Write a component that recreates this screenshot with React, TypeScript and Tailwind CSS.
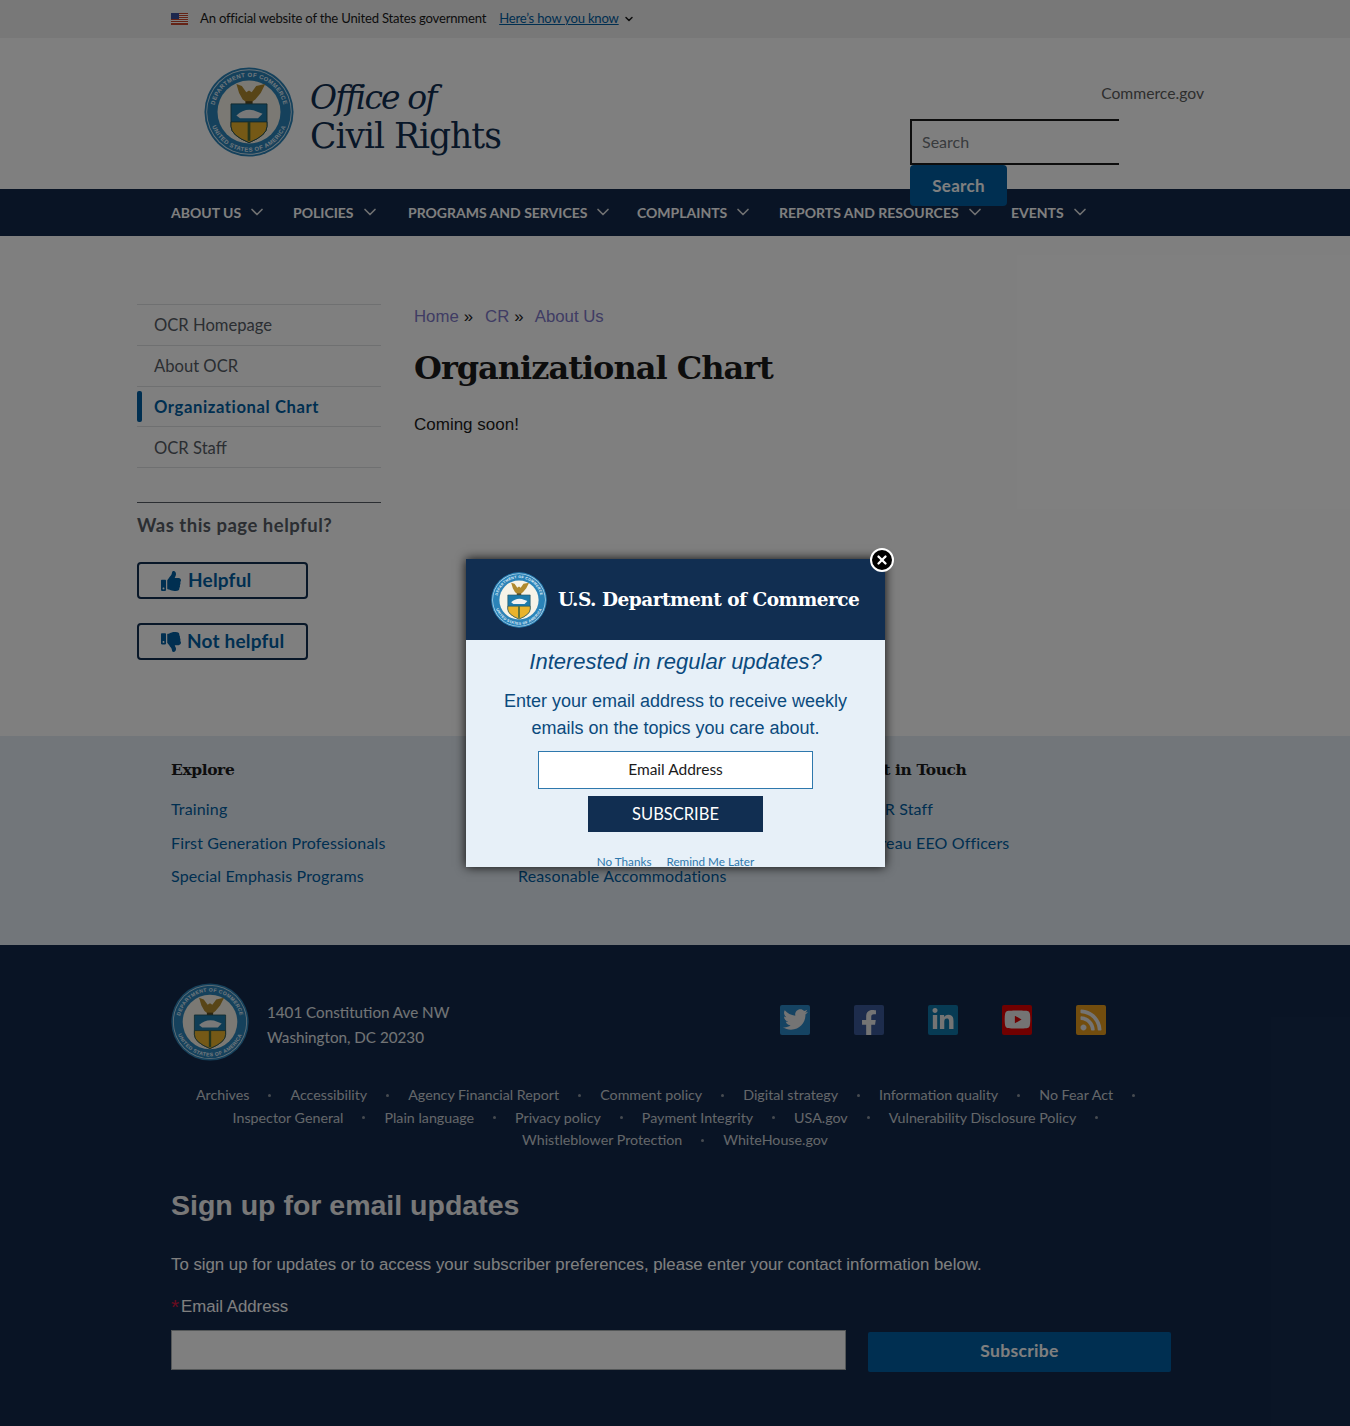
import React from 'react';
import { ChevronDown, X } from 'lucide-react';
import { FaThumbsUp, FaThumbsDown, FaTwitter, FaFacebookF, FaLinkedinIn, FaYoutube, FaRss } from 'react-icons/fa';

const navItems = [
  { label: 'About us', width: 'w-[122px]' },
  { label: 'Policies', width: 'w-[115px]' },
  { label: 'Programs and services', width: 'w-[229px]' },
  { label: 'Complaints', width: 'w-[142px]' },
  { label: 'Reports and resources', width: 'w-[232px]' },
  { label: 'Events', width: 'w-auto' },
];

const sideLinks = ['OCR Homepage', 'About OCR', 'Organizational Chart', 'OCR Staff'];

const footerRows = [
  ['Archives', 'Accessibility', 'Agency Financial Report', 'Comment policy', 'Digital strategy', 'Information quality', 'No Fear Act'],
  ['Inspector General', 'Plain language', 'Privacy policy', 'Payment Integrity', 'USA.gov', 'Vulnerability Disclosure Policy'],
  ['Whistleblower Protection', 'WhiteHouse.gov'],
];

function Seal({ className }: { className: string }) {
  return (
    <svg viewBox="0 0 100 100" className={className}>
      <defs>
        <path id="sealTop" d="M 11 50 A 39 39 0 0 1 89 50" />
        <path id="sealBottom" d="M 6 50 A 44 44 0 0 0 94 50" />
      </defs>
      <circle cx="50" cy="50" r="49.5" fill="#2b83b8" />
      <circle cx="50" cy="50" r="47.5" fill="#d5e7f2" />
      <circle cx="50" cy="50" r="46.5" fill="#2b83b8" />
      <circle cx="50" cy="50" r="35" fill="#f6f3e8" />
      <text fontSize="6.5" fontWeight="700" fill="#e3f0f8" fontFamily="Liberation Sans, sans-serif" letterSpacing="0.5">
        <textPath href="#sealTop" startOffset="50%" textAnchor="middle">DEPARTMENT OF COMMERCE</textPath>
      </text>
      <text fontSize="6.5" fontWeight="700" fill="#e3f0f8" fontFamily="Liberation Sans, sans-serif" letterSpacing="0.5">
        <textPath href="#sealBottom" startOffset="50%" textAnchor="middle">UNITED STATES OF AMERICA</textPath>
      </text>
      <path d="M36 19 L42 21 L47 28 L50 26 L53 28 L58 21 L68 19 L63 29 L57 36 L53 39 H47 L43 36 L39 29 Z" fill="#b08a2e" />
      <rect x="46" y="38" width="8" height="3" fill="#5b4a1c" />
      <path d="M30 41 H70 V66 Q70 76 50 84 Q30 76 30 66 Z" fill="#1f7bab" stroke="#1f4e56" strokeWidth="1" />
      <path d="M30 61 H70 V66 Q70 76 50 84 Q30 76 30 66 Z" fill="#eab32c" stroke="#1f4e56" strokeWidth="1" />
      <path d="M36 54 Q44 46 55 48 L65 52 L60 57 H40 Z" fill="#f2f2f2" />
      <rect x="48.5" y="61" width="3" height="21" fill="#4a6a3a" />
    </svg>
  );
}

function Flag() {
  return (
    <svg viewBox="0 0 17 12" className="w-[17px] h-3">
      <rect width="17" height="12" fill="#fff" />
      <path d="M0 0h17v1H0zM0 2h17v1H0zM0 4h17v1H0zM0 6h17v1H0zM0 8h17v1H0zM0 10h17v1H0z" fill="#c9462c" />
      <rect y="11" width="17" height="1" fill="#c9462c" />
      <rect width="8" height="6" fill="#3b4f9c" />
    </svg>
  );
}

function SocialIcon({ bg, children }: { bg: string; children: React.ReactNode }) {
  return (
    <a className={`w-[30px] h-[30px] rounded-[2px] flex items-center justify-center text-[#e8e8e8] overflow-hidden ${bg}`}>
      {children}
    </a>
  );
}

export default function App() {
  return (
    <div className="relative h-[1426px] overflow-hidden bg-white text-[#1b1b1b] font-['Lato',sans-serif]">
      {/* gov banner */}
      <div className="h-[38px] bg-[#f0f0f0] pl-[171px] flex items-center text-[13.1px] tracking-[-0.2px]">
        <Flag />
        <span className="ml-3">An official website of the United States government</span>
        <a className="ml-[13px] text-[#005ea2] underline">Here’s how you know</a>
        <ChevronDown className="w-3 h-3 ml-[4px] text-[#1b1b1b]" strokeWidth={3} />
      </div>

      {/* header */}
      <header className="h-[151px] pl-[204px] pr-[146px] flex justify-between">
        <div className="flex items-start pt-[29px]">
          <Seal className="w-[90px] h-[90px]" />
          <div className="ml-4 pt-[12px] font-['DejaVu_Serif',serif] leading-[38px] text-[#112e51]">
            <div className="italic text-[33px] tracking-[-1.9px]">Office of</div>
            <div className="text-[34.5px] tracking-[-1px]">Civil Rights</div>
          </div>
        </div>
        <div className="w-[294px] pt-[44px]">
          <div className="text-right text-[15.7px] leading-[22px] text-[#5c5c5c]">Commerce.gov</div>
          <div className="mt-[15px] w-[209px] h-[46px] border-y-2 border-l-2 border-[#1b1b1b] flex items-center pl-[10px] text-[16px] text-[#71767a]">
            Search
          </div>
          <button className="relative w-[97px] h-[41px] bg-[#005ea2] rounded-[4px] text-white font-bold text-[17px] tracking-[0.3px]">
            Search
          </button>
        </div>
      </header>

      {/* main nav */}
      <nav className="h-[47px] bg-[#13294b] pl-[171px] pb-[1px] flex items-center text-white font-bold text-[14px] uppercase">
        {navItems.map((item) => (
          <div key={item.label} className={`flex items-center shrink-0 ${item.width}`}>
            <span>{item.label}</span>
            <ChevronDown className="w-[20px] h-[20px] ml-[6px] text-[#dfe1e2]" strokeWidth={2} />
          </div>
        ))}
      </nav>

      {/* content */}
      <div className="h-[500px] pl-[137px] pt-[68px] flex">
        <aside className="w-[244px]">
          <ul className="border-t border-[#dfe1e2] text-[16.6px]">
            {sideLinks.map((link) => {
              const active = link === 'Organizational Chart';
              return (
                <li key={link} className="relative h-[40.75px] border-b border-[#dfe1e2] pl-[17px] pt-[2px] flex items-center text-[#565c65]">
                  {active && <span className="absolute left-0 top-[4px] h-[31px] w-[5px] bg-[#005ea2] rounded-[2px]" />}
                  <span className={active ? 'font-bold text-[#005ea2] tracking-[0.6px]' : ''}>{link}</span>
                </li>
              );
            })}
          </ul>
          <div className="mt-[34px] border-t border-[#565c65] pt-[10px] text-[18.5px] leading-[24px] font-bold tracking-[0.5px] text-[#565c65]">
            Was this page helpful?
          </div>
          <button className="mt-[25px] w-[171px] h-[37px] border-2 border-[#112e51] rounded-[4px] pl-[22px] flex items-center text-[#005ea2] font-bold text-[19px] tracking-[0.2px]">
            <FaThumbsUp className="w-[20px] h-[20px] mr-[7px]" />
            Helpful
          </button>
          <button className="mt-[24px] w-[171px] h-[37px] border-2 border-[#112e51] rounded-[4px] pl-[22px] flex items-center text-[#005ea2] font-bold text-[19px] tracking-[0.2px]">
            <FaThumbsDown className="w-[20px] h-[20px] mr-[6px]" />
            Not helpful
          </button>
        </aside>
        <main className="ml-[33px]">
          <div className="pt-[1px] font-['Liberation_Sans',sans-serif] text-[16.8px] leading-[24px] text-[#1b1b1b]">
            <a className="text-[#8078c8]">Home</a>
            <span className="ml-[5px]">»</span>
            <a className="ml-[12px] text-[#8078c8]">CR</a>
            <span className="ml-[5px]">»</span>
            <a className="ml-[11px] text-[#8078c8]">About Us</a>
          </div>
          <h1 className="mt-[16px] font-['DejaVu_Serif',serif] font-bold text-[32px] leading-[46px] tracking-[-1px] text-[#1b1b1b]">
            Organizational Chart
          </h1>
          <p className="mt-[22px] font-['Liberation_Sans',sans-serif] text-[17px] leading-[24px]">Coming soon!</p>
        </main>
      </div>

      {/* light footer */}
      <div className="h-[209px] bg-[#e4ecf5] pl-[171px] pt-[22px] grid grid-cols-[347px_343px_1fr]">
        <div>
          <h3 className="font-['DejaVu_Serif',serif] font-bold text-[15.5px] leading-[24px] tracking-[-0.4px]">Explore</h3>
          <ul className="mt-[10px] text-[#005ea2] text-[16px] tracking-[0.15px] leading-[33.5px]">
            <li>Training</li>
            <li>First Generation Professionals</li>
            <li>Special Emphasis Programs</li>
          </ul>
        </div>
        <div>
          <h3 className="font-['DejaVu_Serif',serif] font-bold text-[15.5px] leading-[24px] tracking-[-0.4px]">Resources</h3>
          <ul className="mt-[10px] text-[#005ea2] text-[16px] tracking-[0.15px] leading-[33.5px]">
            <li>EEO Complaints</li>
            <li>Policies</li>
            <li>Reasonable Accommodations</li>
          </ul>
        </div>
        <div>
          <h3 className="font-['DejaVu_Serif',serif] font-bold text-[15.5px] leading-[24px] tracking-[-0.4px]">Get in Touch</h3>
          <ul className="mt-[10px] text-[#005ea2] text-[16px] tracking-[0.15px] leading-[33.5px]">
            <li>OCR Staff</li>
            <li>Bureau EEO Officers</li>
          </ul>
        </div>
      </div>

      {/* dark footer */}
      <footer className="h-[481px] bg-[#13294b] px-[171px] pt-[38px] text-[#e4e8ec]">
        <div className="flex items-center h-[78px]">
          <Seal className="w-[78px] h-[78px] shrink-0" />
          <div className="ml-[18px] pt-[5px] text-[15.2px] leading-[25px]">
            <div>1401 Constitution Ave NW</div>
            <div>Washington, DC 20230</div>
          </div>
          <div className="ml-[331px] flex gap-[44px] -mt-[5px]">
            <SocialIcon bg="bg-[#2b86c5]"><FaTwitter className="w-[25px] h-[25px]" /></SocialIcon>
            <SocialIcon bg="bg-[#3b5998]"><FaFacebookF className="w-[20px] h-[26px] mt-[6px]" /></SocialIcon>
            <SocialIcon bg="bg-[#0e76a8]"><FaLinkedinIn className="w-[24px] h-[24px]" /></SocialIcon>
            <SocialIcon bg="bg-[#e00000]"><FaYoutube className="w-[27px] h-[27px]" /></SocialIcon>
            <SocialIcon bg="bg-[#e59a1c]"><FaRss className="w-[24px] h-[24px]" /></SocialIcon>
          </div>
        </div>
        <div className="mt-[23px] text-[14.25px] leading-[22.5px] text-[#c9ced4]">
          {footerRows.map((row, r) => (
            <div key={r} className="flex justify-center">
              {row.map((link, i) => (
                <React.Fragment key={link}>
                  <span>{link}</span>
                  {(r < 2 || i < row.length - 1) && (
                    <span className="w-[41px] flex items-center justify-center">
                      <span className="w-[3px] h-[3px] rounded-full bg-[#8d96a0]" />
                    </span>
                  )}
                </React.Fragment>
              ))}
            </div>
          ))}
        </div>
        <div className="font-['Liberation_Sans',sans-serif]">
          <h2 className="mt-[31px] font-bold text-[28.5px] leading-[44px] text-[#f0f0f0]">Sign up for email updates</h2>
          <p className="mt-[26px] text-[16.8px] leading-[24px] text-white">
            To sign up for updates or to access your subscriber preferences, please enter your contact information below.
          </p>
          <div className="mt-[18px] flex items-center text-[16.8px] leading-[24px] text-white">
            <span className="w-[10px] text-[21px] leading-[24px] text-[#d01840]">*</span>Email Address
          </div>
          <div className="mt-[11px] flex items-start">
            <div className="w-[675px] h-[40px] bg-white border border-[#a9aeb1]" />
            <button className="ml-[22px] mt-[2px] w-[303px] h-[40px] bg-[#005ea2] rounded-[2px] text-white font-bold text-[17.5px] tracking-[0.3px] font-['Lato',sans-serif]">
              Subscribe
            </button>
          </div>
        </div>
      </footer>

      {/* modal overlay */}
      <div className="absolute inset-0 bg-black/50" />
      <div className="absolute left-[466px] top-[559px] w-[419px] shadow-[0_0_10px_rgba(0,0,0,0.9)]">
        <div className="h-[308px] overflow-hidden bg-[#e7f0f8] text-center">
          <div className="h-[81px] bg-[#112e51] pl-[25px] flex items-center">
            <Seal className="w-[56px] h-[56px]" />
            <span className="ml-[11px] font-['DejaVu_Serif',serif] font-bold text-[18.5px] tracking-[-0.5px] text-white whitespace-nowrap">
              U.S. Department of Commerce
            </span>
          </div>
          <div className="mt-[8px] font-['Liberation_Sans',sans-serif] italic text-[22px] leading-[28px] text-[#0b4a7d]">
            Interested in regular updates?
          </div>
          <p className="mt-[12px] font-['Liberation_Sans',sans-serif] text-[18px] leading-[27px] text-[#0b4a7d]">
            Enter your email address to receive weekly
            <br />
            emails on the topics you care about.
          </p>
          <div className="mx-auto mt-[9px] w-[275px] h-[38px] bg-white border border-[#2e78ad] flex items-center justify-center text-[15.5px] text-[#1b1b1b]">
            Email Address
          </div>
          <button className="mt-[7px] w-[175px] h-[36px] bg-[#112e51] text-white text-[16.5px] uppercase">Subscribe</button>
          <div className="mt-[21px] flex justify-center gap-[15px] text-[11.7px] leading-[16px] text-[#2e78ad]">
            <span>No Thanks</span>
            <span>Remind Me Later</span>
          </div>
        </div>
        <button className="absolute -right-[9px] -top-[11px] w-[24px] h-[24px] rounded-full bg-black border-2 border-white flex items-center justify-center text-white">
          <X className="w-[14px] h-[14px]" strokeWidth={4} />
        </button>
      </div>
    </div>
  );
}
